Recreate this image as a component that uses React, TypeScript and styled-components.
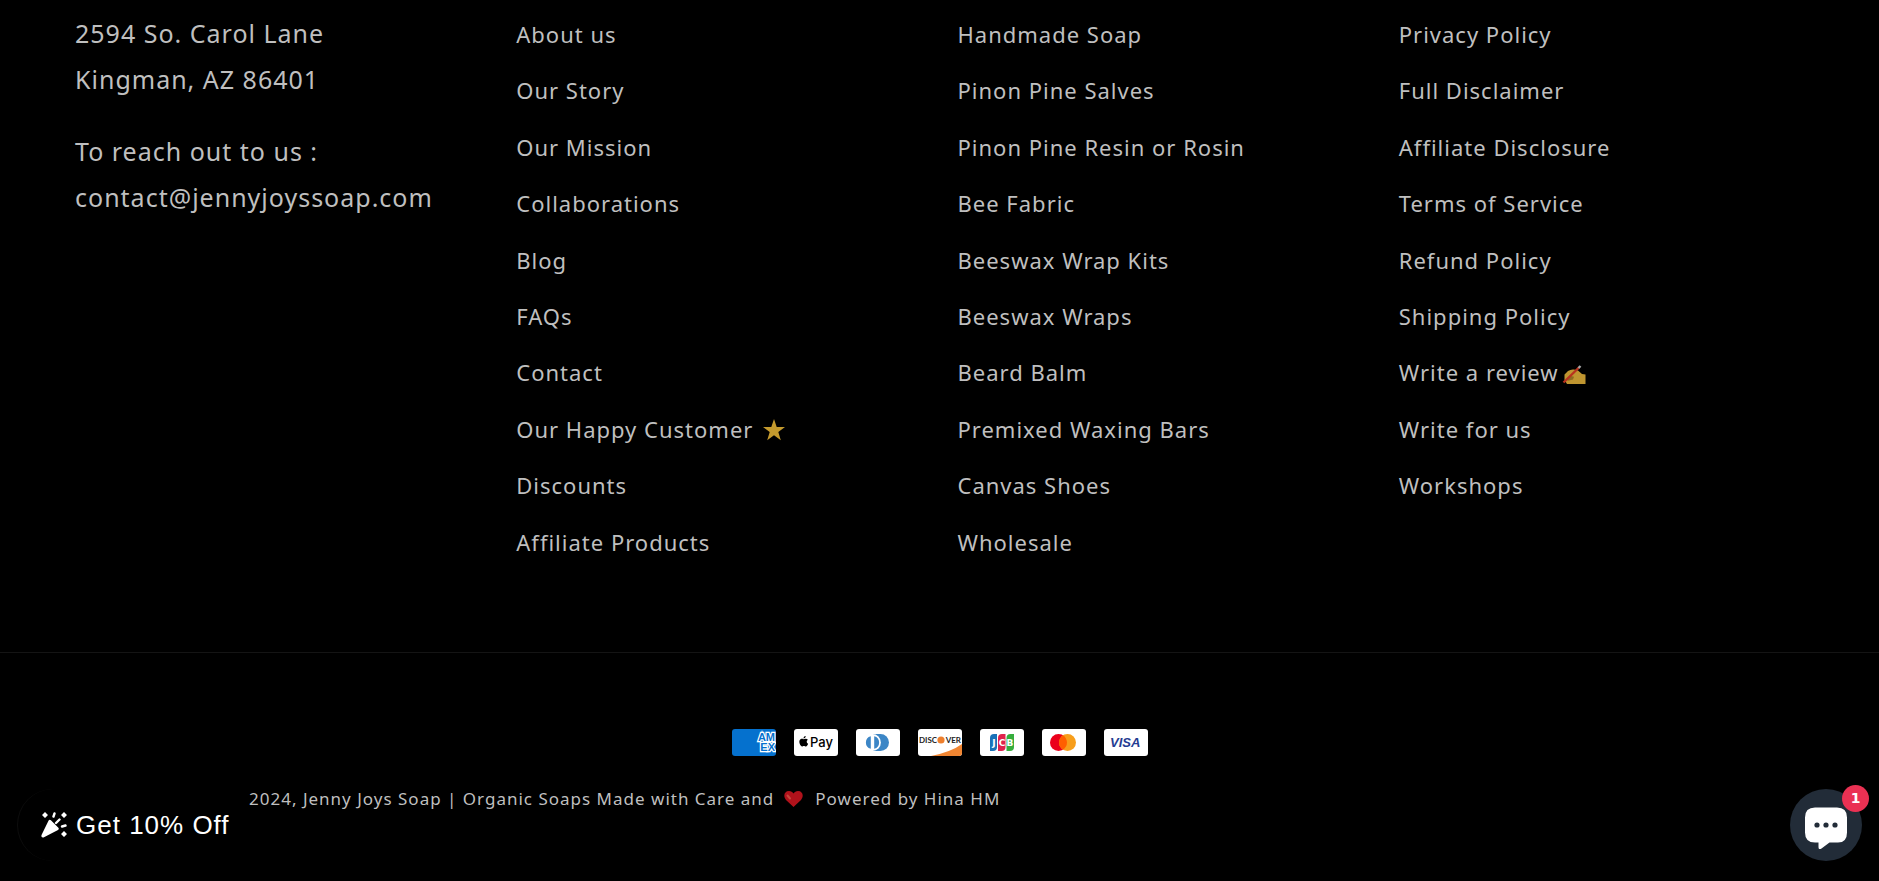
import React from 'react';
import styled, { createGlobalStyle } from 'styled-components';

const GlobalStyle = createGlobalStyle`
  * { box-sizing: border-box; }
  html, body { margin: 0; background: #000; }
  body {
    color: #bfbfbf;
    font-family: 'Noto Sans', 'Open Sans', sans-serif;
    letter-spacing: 1px;
  }
`;

const Footer = styled.footer`
  background: #000;
`;

const Columns = styled.div`
  display: grid;
  grid-template-columns: repeat(4, minmax(0, 1fr));
  column-gap: 36px;
  padding: 7px 75px 81px;
`;

const Address = styled.address`
  padding-top: 3px;
  font-style: normal;
  font-size: 25px;
  line-height: 46px;
  white-space: nowrap;

  p { margin: 0 0 26px; }
`;

const LinkList = styled.ul`
  margin: 0;
  padding: 0;
  list-style: none;
  font-size: 22px;
  line-height: 1.7;
`;

const LinkItem = styled.li`
  padding: 9px 0 10px;
`;

const FooterLink = styled.a`
  display: flex;
  align-items: center;
  color: inherit;
  text-decoration: none;
  white-space: nowrap;
`;

const Emoji = styled.svg<{ $gap: number }>`
  flex: none;
  margin-left: ${({ $gap }) => $gap}px;
`;

const Bottom = styled.div`
  border-top: 1px solid #141414;
  padding: 76px 75px 67px;
`;

const Payments = styled.ul`
  display: flex;
  justify-content: center;
  gap: 18px;
  margin: 0;
  padding: 0;
  list-style: none;

  svg { display: block; }
`;

const Copyright = styled.small`
  display: flex;
  align-items: center;
  margin-top: 27px;
  padding-left: 174px;
  font-size: 17px;
  line-height: 32px;
  white-space: nowrap;

  a { color: inherit; text-decoration: none; }
`;

const Heart = styled.svg`
  margin: 0 12px 0 10px;
`;

const OfferButton = styled.button`
  position: fixed;
  left: 17px;
  bottom: 20px;
  display: flex;
  align-items: center;
  gap: 9px;
  height: 72px;
  padding: 0 0 0 23px;
  border: 0;
  border-left: 1px solid #0d0d0d;
  border-radius: 36px 0 0 36px;
  background: #000;
  color: #fff;
  font-family: 'Liberation Sans', Arial, sans-serif;
  font-size: 26px;
  letter-spacing: 1px;
  cursor: pointer;
`;

const ChatButton = styled.button`
  position: fixed;
  right: 17px;
  bottom: 20px;
  display: grid;
  place-items: center;
  width: 72px;
  height: 72px;
  padding: 0;
  border: 0;
  border-radius: 50%;
  background: #222c38;
  cursor: pointer;
`;

const Badge = styled.span`
  position: absolute;
  top: -4px;
  right: -7px;
  width: 27px;
  height: 27px;
  border-radius: 50%;
  background: #ea3153;
  color: #fff;
  font: 700 14px/27px 'DejaVu Sans', sans-serif;
  letter-spacing: 0;
  text-align: center;
`;

type Item = { label: string; icon?: React.ReactNode };

const StarIcon = () => (
  <Emoji $gap={10} width="22" height="24" viewBox="0 0 22 24" aria-hidden="true">
    <path fill="#c49a2e" d="M11 2l2.700 8H22l-6.700 5 2.500 8.300L11 18.300l-6.800 5L6.700 15 0 10h8.300z" />
  </Emoji>
);

const WritingHandIcon = () => (
  <Emoji $gap={3} width="24" height="28" viewBox="0 0 24 28" aria-hidden="true">
    <path fill="#bf9530" d="M2.500 21V15.500L6 12q3-2 6-1.500l4 1 4 3.500 3.500.5V25H5z" />
    <path fill="#8f6a20" d="M4 20l5-3 3 .8-1 2.700-5 1.200z" />
    <path stroke="#b8321f" strokeWidth="2.400" d="M1.500 23.500L17 8.500" />
    <path stroke="#a9a9a9" strokeWidth="2.400" d="M16.500 9L18.500 7" />
  </Emoji>
);

const columns: { name: string; items: Item[] }[] = [
  {
    name: 'About',
    items: [
      { label: 'About us' },
      { label: 'Our Story' },
      { label: 'Our Mission' },
      { label: 'Collaborations' },
      { label: 'Blog' },
      { label: 'FAQs' },
      { label: 'Contact' },
      { label: 'Our Happy Customer', icon: <StarIcon /> },
      { label: 'Discounts' },
      { label: 'Affiliate Products' },
    ],
  },
  {
    name: 'Shop',
    items: [
      { label: 'Handmade Soap' },
      { label: 'Pinon Pine Salves' },
      { label: 'Pinon Pine Resin or Rosin' },
      { label: 'Bee Fabric' },
      { label: 'Beeswax Wrap Kits' },
      { label: 'Beeswax Wraps' },
      { label: 'Beard Balm' },
      { label: 'Premixed Waxing Bars' },
      { label: 'Canvas Shoes' },
      { label: 'Wholesale' },
    ],
  },
  {
    name: 'Policies',
    items: [
      { label: 'Privacy Policy' },
      { label: 'Full Disclaimer' },
      { label: 'Affiliate Disclosure' },
      { label: 'Terms of Service' },
      { label: 'Refund Policy' },
      { label: 'Shipping Policy' },
      { label: 'Write a review', icon: <WritingHandIcon /> },
      { label: 'Write for us' },
      { label: 'Workshops' },
    ],
  },
];

const Card = ({ name, fill = '#fff', children }: { name: string; fill?: string; children: React.ReactNode }) => (
  <li>
    <svg width="44" height="27" viewBox="0 0 44 27" role="img" aria-label={name} letterSpacing="0">
      <rect width="44" height="27" rx="3" fill={fill} />
      {children}
    </svg>
  </li>
);

const cardFont = "'Liberation Sans', Arial, sans-serif";

const PaymentCards = () => (
  <Payments>
    <Card name="American Express" fill="#0571ce">
      <g fill="#0571ce" stroke="#fff" strokeWidth="2.400" paintOrder="stroke" fontFamily={cardFont} fontWeight="700" fontSize="11" textAnchor="end">
        <text x="43" y="12">AM</text>
        <text x="43" y="22">EX</text>
      </g>
    </Card>
    <Card name="Apple Pay">
      <path d="M9.600 10.200c.8 0 1.500-.6 2.300-.5.8 0 1.500.4 1.900 1-1.600 1-1.400 3.300.3 4-.4 1.200-1.200 2.700-2.200 2.700-.8 0-1.100-.5-2-.5s-1.200.5-2 .5c-1.600-.3-3.400-4.300-2.100-6.300.8-1.300 2.400-1.600 3.800-.9zM9.500 9.400c0-1.400.9-2.400 2.200-2.500.1 1.400-1 2.500-2.200 2.500z" />
      <text x="16" y="18" fontFamily="Inter, sans-serif" fontWeight="500" fontSize="13">Pay</text>
    </Card>
    <Card name="Diners Club">
      <path fill="#3c86c6" d="M17 5h7.500a8.500 8.500 0 0 1 0 17h-7.500z" />
      <circle cx="16.500" cy="13.500" r="8.400" fill="#fff" />
      <path fill="#3c86c6" d="M14.800 7.200v12.600a6.500 6.500 0 0 1 0-12.600zM18.200 7.200v12.600a6.500 6.500 0 0 0 0-12.600z" />
    </Card>
    <Card name="Discover">
      <path fill="#f08532" d="M44 15v9a3 3 0 0 1-3 3H13Q33 23 44 15z" />
      <g fontFamily="Lato, sans-serif" fontWeight="700" fontSize="8" fill="#222">
        <text x="1" y="14">DISC</text>
        <text x="43" y="14" textAnchor="end">VER</text>
      </g>
      <circle cx="23" cy="11" r="3.600" fill="#ee7f2d" />
    </Card>
    <Card name="JCB">
      <path fill="#1972b8" d="M10 22V9q0-4 4-4h3v13q0 4-4 4z" />
      <path fill="#e0224c" d="M18 22V9q0-4 4-4h3.500v13q0 4-4 4z" />
      <path fill="#35ad3d" d="M26.500 22V9q0-4 4-4H34v13q0 4-4 4z" />
      <g fontFamily="'DejaVu Sans', sans-serif" fontWeight="700" fontSize="9" fill="#fff" textAnchor="middle">
        <text x="14" y="17">J</text>
        <text x="22" y="17">C</text>
        <text x="30" y="17">B</text>
      </g>
    </Card>
    <Card name="Mastercard">
      <circle cx="16.500" cy="13.500" r="8.500" fill="#eb001b" />
      <circle cx="25.500" cy="13.500" r="8.500" fill="#f79e1b" />
      <path fill="#ff5f00" d="M21 6.300a8.500 8.500 0 0 1 0 14.400 8.500 8.500 0 0 1 0-14.400z" />
    </Card>
    <Card name="Visa">
      <text x="6" y="18" fontFamily={cardFont} fontWeight="700" fontStyle="italic" fontSize="13" fill="#253c92">VISA</text>
    </Card>
  </Payments>
);

export default function App() {
  return (
    <>
      <GlobalStyle />
      <Footer>
        <Columns>
          <Address>
            <p>2594 So. Carol Lane<br />Kingman, AZ 86401</p>
            <p>To reach out to us :<br />contact@jennyjoyssoap.com</p>
          </Address>
          {columns.map(({ name, items }) => (
            <nav key={name} aria-label={name}>
              <LinkList>
                {items.map(({ label, icon }) => (
                  <LinkItem key={label}>
                    <FooterLink href="#">{label}{icon}</FooterLink>
                  </LinkItem>
                ))}
              </LinkList>
            </nav>
          ))}
        </Columns>
        <Bottom>
          <PaymentCards />
          <Copyright>
            <span>2024, <a href="#">Jenny Joys Soap | Organic Soaps Made with Care and</a></span>
            <Heart width="19" height="16" viewBox="0 0 19 16" aria-hidden="true">
              <path fill="#b0121b" d="M9.500 16L2 9C-1 5.500 0 0 5 0c2 0 3.500 1 4.500 2.500C10.500 1 12 0 14 0c5 0 6 5.500 3 9z" />
              <path fill="none" stroke="#c4473c" strokeWidth="2" strokeLinecap="round" d="M3.500 4.500L6 7.500" />
            </Heart>
            <a href="#">Powered by Hina HM</a>
          </Copyright>
        </Bottom>
      </Footer>
      <OfferButton type="button">
        <svg width="26" height="26" viewBox="0 0 26 26" fill="#fff" aria-hidden="true">
          <path d="M7.600 8.500q1-1.500 2.300-.2l7.500 7.500q1.200 1.400-.4 2.200L2.500 25.500Q0 26 .4 23.300z" />
          <path d="M4 0l3 3-3 3-3-3zM23 0l3 3-3 3-3-3zM23 19l3 3-3 3-3-3z" />
          <path fill="none" stroke="#fff" strokeWidth="2.400" strokeLinecap="round" d="M13.500 1.500l-1 3M18.500 7.500L15 11M21 14.500l3.500-1" />
        </svg>
        Get 10% Off
      </OfferButton>
      <ChatButton type="button" aria-label="Open chat, 1 unread message">
        <svg width="42" height="48" viewBox="0 0 42 48" aria-hidden="true">
          <path fill="#fff" d="M10 6.500h22q10 0 10 10v15q0 10-9 10h-8.500l-8 6q-3 2-3-1.500v-4.500H10q-10 0-10-10v-15q0-10 10-10z" />
          <g fill="#222c38">
            <circle cx="12" cy="24" r="2.600" />
            <circle cx="21" cy="24" r="2.600" />
            <circle cx="30" cy="24" r="2.600" />
          </g>
        </svg>
        <Badge>1</Badge>
      </ChatButton>
    </>
  );
}
